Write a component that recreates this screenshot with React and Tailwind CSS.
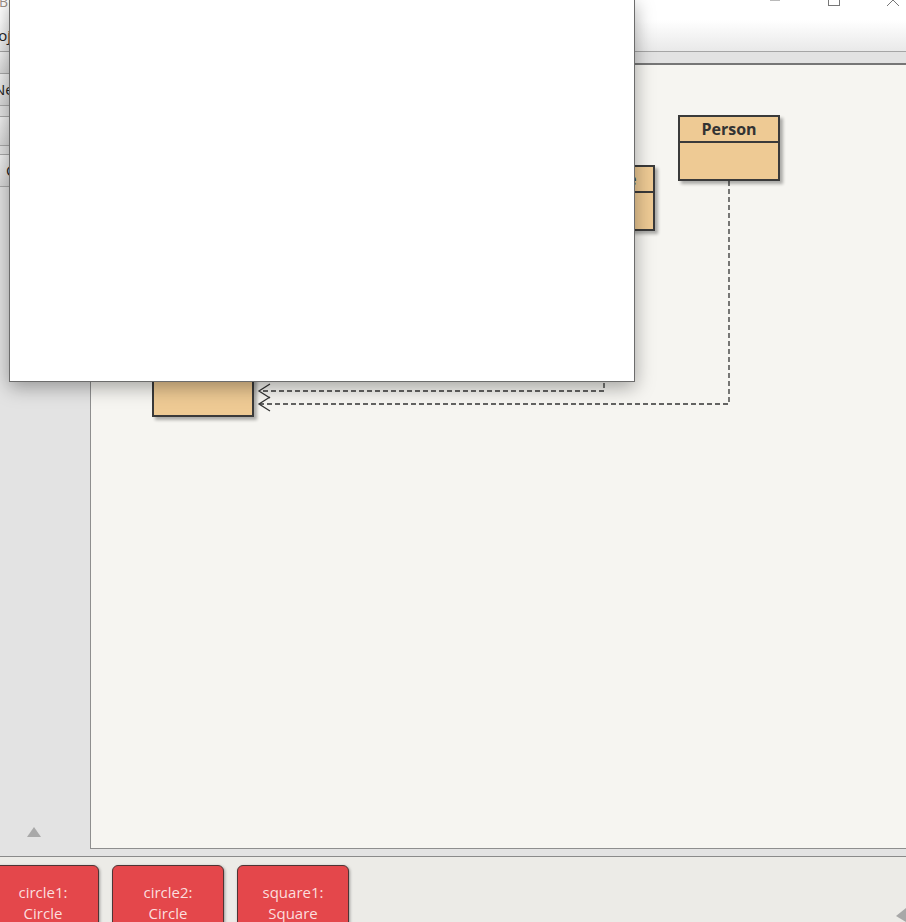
import React from 'react';

const ClassBox = ({ name, className }) => (
  <div
    className={`absolute w-[102px] h-[66px] bg-[#eeca94] border-2 border-[#3a3a3a] shadow-[3px_3px_3px_rgba(0,0,0,0.3)] flex flex-col ${className}`}
  >
    <div className="h-[26px] border-b-2 border-[#3a3a3a] flex items-center justify-center text-[16px] font-bold text-[#333] whitespace-nowrap">
      {name}
    </div>
  </div>
);

const BenchObject = ({ name, type, className = '' }) => (
  <div
    className={`w-[112px] h-[70px] shrink-0 rounded-[6px] bg-[#e4474b] border border-[#4f3434] shadow-[1px_1px_3px_rgba(0,0,0,0.35)] pt-[16px] text-center text-[15px] leading-[21px] text-[#fbdede] ${className}`}
  >
    <div>{name}:</div>
    <div>{type}</div>
  </div>
);

export default function App() {
  return (
    <div className="relative w-[906px] h-[922px] overflow-hidden bg-white font-['Open_Sans',sans-serif]">
      {/* title bar */}
      <div className="relative h-[20px] bg-white">
        <span className="absolute left-[-1px] top-[-9px] text-[14px] text-[#9b8f86]">BlueJ</span>
        <svg className="absolute left-[766px] top-[-10px]" width="140" height="20" viewBox="0 0 140 20">
          <line x1="4" y1="10" x2="14" y2="10" stroke="#777" strokeWidth="1" />
          <rect x="62.5" y="4.5" width="11" height="11" fill="none" stroke="#777" strokeWidth="1" />
          <path d="M121 4 L133 16 M133 4 L121 16" stroke="#777" strokeWidth="1" fill="none" />
        </svg>
      </div>

      {/* menu bar */}
      <div className="h-[32px] bg-gradient-to-b from-white to-[#e9e9e9] border-b border-[#a5a5a5] flex items-center">
        <span className="ml-[-17px] text-[15px] text-[#222]">Project</span>
      </div>

      {/* main */}
      <div className="flex h-[804px]">
        <div className="w-[90px] bg-[#e3e3e3] flex flex-col relative">
          <div className="h-[22px] -ml-[10px] w-[92px] bg-gradient-to-b from-[#f2f2f2] to-[#d9d9d9] border-b border-[#a9a9a9]" />
          <div className="h-[32px] -ml-[10px] w-[92px] bg-gradient-to-b from-[#f2f2f2] to-[#d9d9d9] border-b border-[#a9a9a9] flex items-center pl-[4px] text-[15px] text-[#222] whitespace-nowrap">
            New Class...
          </div>
          <div className="mt-[10px] h-[30px] -ml-[10px] w-[92px] bg-gradient-to-b from-[#f2f2f2] to-[#d9d9d9] border-y border-[#a9a9a9]" />
          <div className="mt-[8px] h-[33px] -ml-[10px] w-[92px] bg-gradient-to-b from-[#f2f2f2] to-[#d9d9d9] border-y border-[#a9a9a9] flex items-center pl-[16px] text-[15px] text-[#222]">
            Compile
          </div>
          <div className="mt-auto mb-[19px] ml-[27px] w-0 h-0 border-l-[7px] border-r-[7px] border-b-[10px] border-l-transparent border-r-transparent border-b-[#a9a9a9]" />
        </div>

        <div className="flex-1 flex flex-col">
          <div className="h-[13px] bg-[#e2e2e2] border-b-2 border-[#767676]" />
          <div className="relative h-[784px] bg-[#f6f5f1] border-l border-b border-[#8e8e8e]">
            <svg className="absolute inset-0" width="815" height="783">
              <g stroke="#333" strokeWidth="1.3" fill="none">
                <path d="M638 116 L638 339 L169 339" strokeDasharray="5 3" />
                <path d="M513 166 L513 326 L169 326" strokeDasharray="5 3" />
                <path d="M179 319 L168 326 L179 333" />
                <path d="M179 332 L168 339 L179 346" />
              </g>
            </svg>
            <ClassBox name="Person" className="left-[587px] top-[50px]" />
            <ClassBox name="Triangle" className="left-[462px] top-[100px]" />
            <ClassBox name="Canvas" className="left-[61px] top-[286px]" />
          </div>
          <div className="h-[7px] bg-[#e3e3e3]" />
        </div>
      </div>

      {/* object bench */}
      <div className="relative h-[66px] bg-[#ecebe7] border-t border-[#8a8a8a] flex gap-[13px] pt-[8px]">
        <BenchObject name="circle1" type="Circle" className="-ml-[13px]" />
        <BenchObject name="circle2" type="Circle" />
        <BenchObject name="square1" type="Square" />
        <svg className="absolute right-0 bottom-0" width="12" height="16" viewBox="0 0 12 16">
          <path d="M12 2 L2 10 L12 16 Z" fill="#a8a8a8" />
        </svg>
      </div>

      {/* popup window on top */}
      <div className="absolute left-[9px] top-0 w-[626px] h-[382px] bg-white border-x border-b border-[#6c6c6c] shadow-[0_5px_18px_rgba(0,0,0,0.35)]" />
    </div>
  );
}
